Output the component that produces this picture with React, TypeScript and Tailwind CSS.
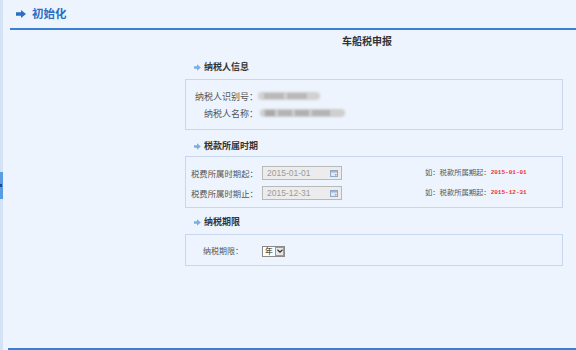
import React from "react";

const Bullet = () => (
  <svg width="7" height="7" viewBox="0 0 7 7" className="shrink-0">
    <path d="M0 2.2h3V0.3L6.8 3.5 3 6.7V4.8H0z" fill="#78aee8" />
  </svg>
);

const Heading = ({ text, className }: { text: string; className: string }) => (
  <div className={`flex h-[12px] items-center gap-[3px] pl-[9px] ${className}`}>
    <Bullet />
    <span className="text-[9px] font-bold leading-[12px] text-[#333]">{text}</span>
  </div>
);

const CalIcon = () => (
  <svg width="8" height="7" viewBox="0 0 8 7" className="shrink-0">
    <rect x="0.5" y="0.5" width="7" height="6" fill="#dfe8f4" stroke="#8fa9c9" />
    <rect x="1" y="1" width="6" height="1.5" fill="#9bb5d8" />
    <rect x="5" y="4" width="1.5" height="1.5" fill="#e58a8a" />
  </svg>
);

const DateInput = ({ value }: { value: string }) => (
  <div className="flex h-[14px] w-[80px] items-center justify-between border border-[#b9b9b9] bg-[#ececec] pl-[4px] pr-[3px]">
    <span className="font-['Liberation_Sans',sans-serif] text-[8.5px] leading-none text-[#9a9a9a]">{value}</span>
    <CalIcon />
  </div>
);

const Hint = ({ date }: { date: string }) => (
  <div className="ml-[83px] flex items-center">
    <span className="text-[7.3px] leading-none text-[#555]">如：税款所属期起：</span>
    <span className="font-['Liberation_Mono',monospace] text-[6px] font-bold leading-none text-[#f03030]">{date}</span>
  </div>
);

export default function App() {
  return (
    <div className="flex h-[350px] w-[576px] overflow-hidden bg-[#edf4fd] font-['Noto_Sans_CJK_SC',sans-serif]">
      <div className="relative w-[3px] shrink-0 bg-[#d3e2f4]">
        <div className="absolute left-0 top-[172px] flex h-[27px] w-[3px] items-center bg-[#5a9be6]">
          <div className="h-[3px] w-[2px] bg-[#234a86]" />
        </div>
      </div>
      <div className="flex flex-1 flex-col">
        <div className="ml-[7px] flex h-[30px] shrink-0 items-center gap-[6px] border-b-2 border-[#3b7fd4] pl-[6px]">
          <svg width="10" height="8" viewBox="0 0 10 8">
            <path d="M0 2.3h5V0l5 4-5 4V5.7H0z" fill="#2b6fc4" />
          </svg>
          <span className="text-[11.5px] font-bold leading-none text-[#2b6fc4]">初始化</span>
        </div>

        <div className="ml-[182px] w-[378px]">
          <div className="mt-[5px] h-[12px] pr-[14px] text-center text-[10px] font-bold leading-[12px] text-[#333]">
            车船税申报
          </div>

          <Heading text="纳税人信息" className="mt-[14px]" />
          <div className="mt-[6px] flex flex-col gap-[3px] border border-[#c7d8ee] pb-[9px] pt-[9px]">
            <div className="flex h-[14px] items-center">
              <span className="w-[72px] text-right text-[9px] leading-none text-[#555]">纳税人识别号：</span>
              <div className="flex h-[8px] w-[62px] items-center gap-[3px] rounded-full bg-[#d2d2d2] px-[6px] blur-[0.8px]">
                <div className="h-[6px] w-[20px] bg-[#b9b9b9]" />
                <div className="h-[6px] w-[20px] bg-[#b9b9b9]" />
              </div>
            </div>
            <div className="flex h-[14px] items-center">
              <span className="w-[72px] text-right text-[9px] leading-none text-[#555]">纳税人名称：</span>
              <div className="ml-[2px] flex h-[8px] w-[85px] items-center gap-[3px] rounded-full bg-[#cfcfcf] px-[5px] blur-[0.8px]">
                <div className="h-[6px] w-[10px] bg-[#a9a9a9]" />
                <div className="h-[6px] w-[14px] bg-[#b4b4b4]" />
                <div className="h-[6px] w-[14px] bg-[#b0b0b0]" />
                <div className="h-[6px] w-[18px] bg-[#b4b4b4]" />
              </div>
            </div>
          </div>

          <Heading text="税款所属时期" className="mt-[10px]" />
          <div className="mt-[4px] flex flex-col gap-[6px] border border-[#c7d8ee] pb-[7px] pl-[5px] pt-[9px]">
            <div className="flex h-[14px] items-center">
              <span className="w-[71px] text-[8.4px] leading-none text-[#555]">税费所属时期起：</span>
              <DateInput value="2015-01-01" />
              <Hint date="2015-01-01" />
            </div>
            <div className="flex h-[14px] items-center">
              <span className="w-[71px] text-[8.4px] leading-none text-[#555]">税费所属时期止：</span>
              <DateInput value="2015-12-31" />
              <Hint date="2015-12-31" />
            </div>
          </div>

          <Heading text="纳税期限" className="mt-[8px]" />
          <div className="mt-[6px] border border-[#c7d8ee] pb-[7px] pl-[17px] pt-[9px]">
            <div className="flex h-[14px] items-center">
              <span className="w-[59px] text-[8px] leading-none text-[#555]">纳税期限：</span>
              <div className="flex h-[11px] w-[23px] items-center border border-[#8a8a8a] bg-white">
                <span className="w-[12px] text-center text-[8px] leading-none text-[#222]">年</span>
                <div className="flex h-[9px] w-[9px] items-center justify-center border border-[#9a9a9a] bg-[#e8e8e8]">
                  <svg width="6" height="4" viewBox="0 0 6 4">
                    <path d="M0.5 0.8L3 3.2 5.5 0.8" stroke="#333" strokeWidth="1.2" fill="none" />
                  </svg>
                </div>
              </div>
            </div>
          </div>
        </div>

        <div className="flex-1" />
        <div className="ml-[5px] h-[2px] shrink-0 bg-[#3b7fd4]" />
      </div>
    </div>
  );
}
